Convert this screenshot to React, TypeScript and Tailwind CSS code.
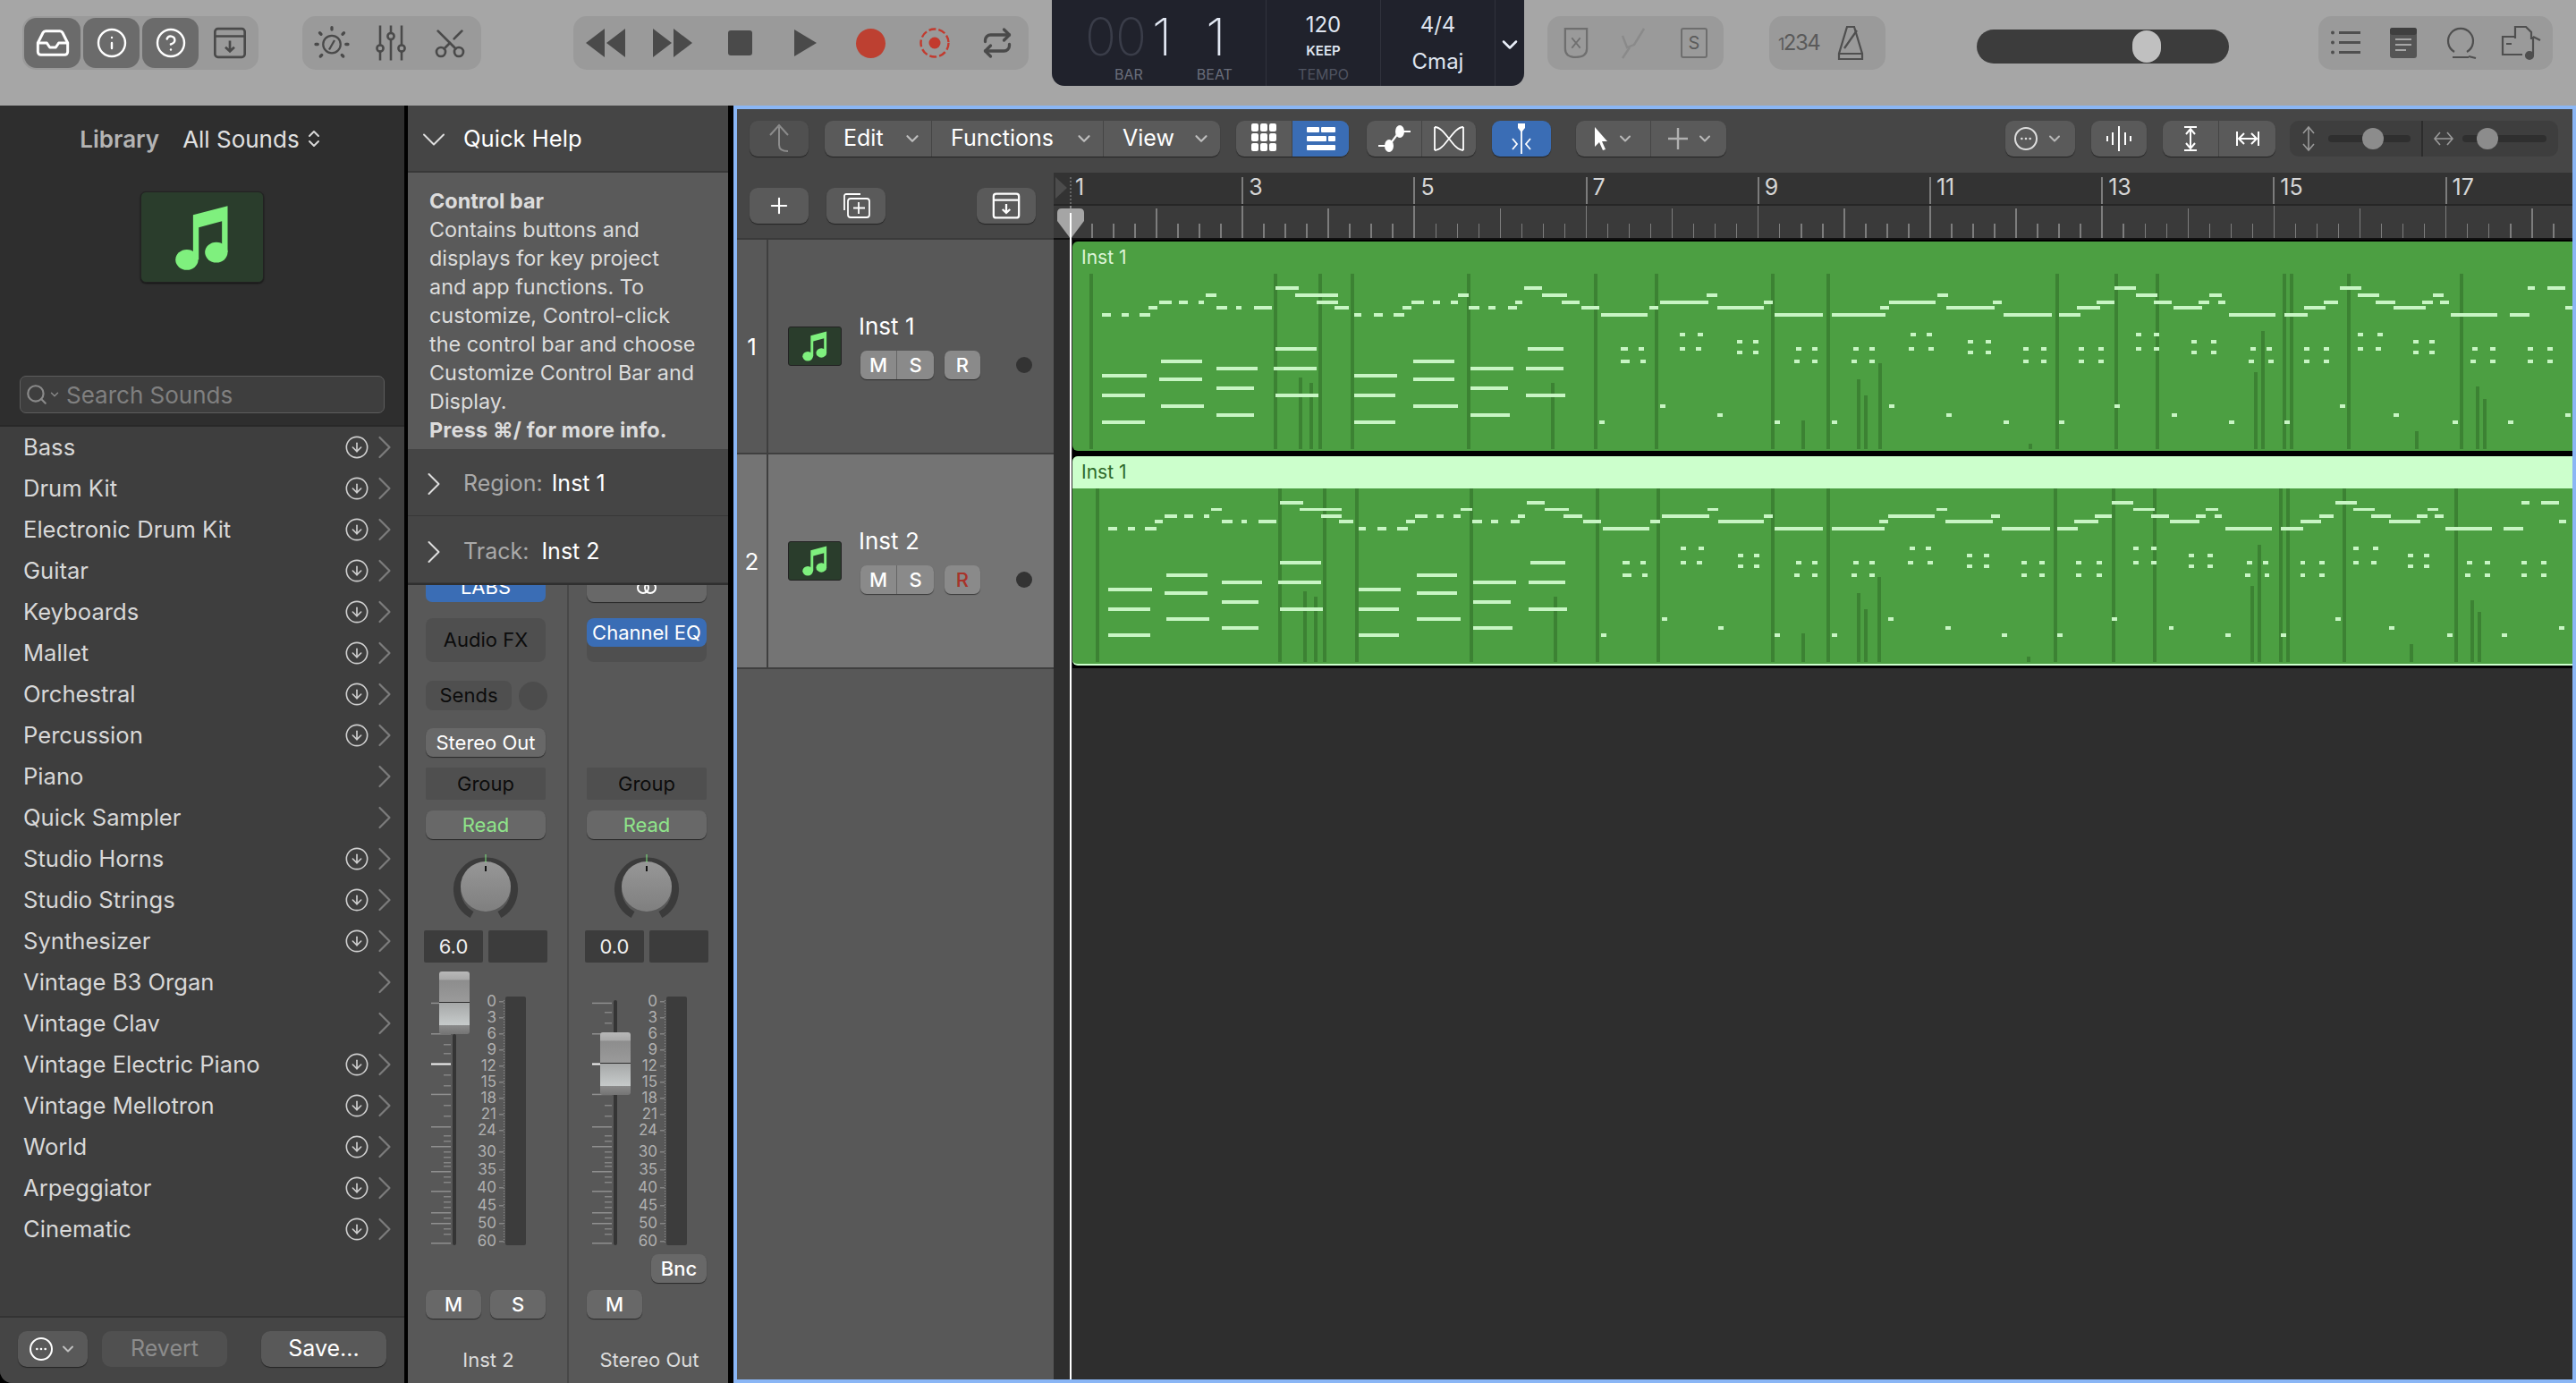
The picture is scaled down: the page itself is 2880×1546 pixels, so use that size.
import React from 'react';
import {
  ChevronDown,
  ChevronRight,
  ChevronsUpDown,
  CircleArrowDown,
  Ellipsis,
  Info,
  CircleHelp,
  Inbox,
  Plus,
  Repeat,
  Scissors,
  Search,
} from 'lucide-react';

const SOUNDS: [string, boolean][] = [
  ['Bass', true],
  ['Drum Kit', true],
  ['Electronic Drum Kit', true],
  ['Guitar', true],
  ['Keyboards', true],
  ['Mallet', true],
  ['Orchestral', true],
  ['Percussion', true],
  ['Piano', false],
  ['Quick Sampler', false],
  ['Studio Horns', true],
  ['Studio Strings', true],
  ['Synthesizer', true],
  ['Vintage B3 Organ', false],
  ['Vintage Clav', false],
  ['Vintage Electric Piano', true],
  ['Vintage Mellotron', true],
  ['World', true],
  ['Arpeggiator', true],
  ['Cinematic', true],
];

// notes are measured off the crops, [from, to, y], mapped back to page x below
type N = [number, number, number];
const a = (u: number) => 1180 + u / 1.96;
const b = (u: number) => 2100 + u / 2.01;
const c = (u: number) => 1960 + u / 3;

const NOTES_A: N[] = [
  [102, 122, 82], [145, 161, 82], [184, 208, 82], [204, 223, 74], [227, 255, 68], [270, 290, 68], [314, 325, 68],
  [329, 353, 60], [353, 377, 74], [396, 408, 74], [435, 474, 74], [482, 533, 52], [525, 619, 60], [572, 619, 68],
  [612, 643, 74], [655, 671, 82], [698, 717, 82], [741, 764, 82], [760, 780, 74], [780, 808, 68], [827, 843, 68],
  [866, 882, 68], [882, 906, 60], [906, 929, 74], [949, 965, 74], [992, 1011, 74], [1007, 1023, 68], [1027, 1066, 52],
  [1066, 1121, 60], [1109, 1149, 68], [1152, 1192, 74], [1196, 1298, 82], [1301, 1321, 74], [1325, 1431, 68],
  [1427, 1450, 60], [1450, 1552, 74], [1552, 1568, 68],
  [102, 200, 150], [102, 196, 172], [102, 196, 202], [231, 321, 134], [227, 321, 154], [231, 325, 184], [353, 443, 142],
  [353, 435, 164], [353, 435, 194], [482, 572, 120], [478, 572, 142], [482, 576, 172], [655, 749, 150], [655, 745, 172],
  [655, 745, 202], [784, 874, 134], [784, 874, 154], [784, 882, 184], [909, 1004, 142], [909, 992, 164], [909, 996, 194],
  [1035, 1113, 120], [1031, 1113, 142], [1031, 1117, 172],
  [1239, 1254, 120], [1278, 1290, 120], [1239, 1258, 134], [1282, 1294, 134], [1368, 1380, 104], [1407, 1419, 104],
  [1368, 1380, 120], [1403, 1415, 120], [1494, 1506, 112], [1529, 1541, 112], [1494, 1506, 124], [1529, 1541, 124],
  [1192, 1203, 202], [1325, 1337, 184], [1450, 1462, 194],
];
const NOTES_C: N[] = [
  [36, 66, 68], [72, 234, 82], [264, 444, 82], [426, 456, 74], [456, 480, 68],
  [144, 162, 120], [198, 216, 120], [138, 156, 134], [198, 216, 134], [336, 354, 120], [390, 408, 120], [330, 348, 134],
  [390, 408, 134], [72, 90, 202], [264, 282, 202], [456, 474, 184],
];
const NOTES_B: N[] = [
  [0, 16, 82], [4, 24, 74], [24, 129, 68], [133, 157, 60], [153, 261, 74], [257, 277, 68], [281, 390, 82], [406, 454, 82],
  [446, 499, 74], [491, 531, 68], [531, 579, 52], [579, 627, 60], [619, 659, 68], [663, 728, 74], [720, 744, 68],
  [744, 772, 60], [764, 780, 68], [788, 893, 82], [913, 965, 82], [957, 1005, 74], [1001, 1033, 68], [1037, 1086, 52],
  [1077, 1126, 60], [1118, 1162, 68], [1158, 1230, 74], [1222, 1246, 68], [1246, 1270, 60], [1262, 1283, 68],
  [1287, 1391, 82], [1419, 1463, 82], [1459, 1476, 52], [1504, 1544, 52], [1544, 1560, 74],
  [72, 84, 104], [109, 121, 104], [68, 80, 120], [113, 125, 120], [201, 213, 112], [241, 253, 112], [201, 213, 124],
  [241, 253, 124], [326, 338, 120], [366, 378, 120], [326, 338, 134], [366, 378, 134], [450, 462, 120], [495, 507, 120],
  [450, 462, 134], [495, 507, 134], [579, 591, 104], [619, 631, 104], [579, 591, 120], [619, 631, 120], [704, 716, 112],
  [748, 760, 112], [704, 716, 124], [748, 760, 124], [836, 848, 120], [872, 884, 120], [832, 844, 134], [876, 888, 134],
  [957, 969, 120], [1001, 1013, 120], [957, 969, 134], [1001, 1013, 134], [1077, 1089, 104], [1122, 1134, 104],
  [1077, 1089, 120], [1118, 1130, 120], [1202, 1214, 112], [1238, 1250, 112], [1202, 1214, 124], [1238, 1250, 124],
  [1335, 1347, 120], [1375, 1387, 120], [1331, 1343, 134], [1375, 1387, 134], [1459, 1471, 120], [1504, 1516, 120],
  [1459, 1471, 134], [1504, 1516, 134],
  [24, 36, 184], [153, 165, 194], [281, 293, 202], [406, 418, 202], [531, 543, 184], [659, 671, 194], [788, 800, 202],
  [913, 925, 202], [1037, 1049, 184], [1158, 1170, 194], [1291, 1303, 202], [1415, 1427, 202], [1544, 1556, 194],
];
// velocity stems: [page x, top]
const STEMS: [number, number][] = [
  [a(78), 36], [a(482), 36], [a(580), 36], [a(651), 36], [a(905), 36], [a(1184), 36], [a(1317), 36],
  [a(537), 152], [a(561), 158], [a(1090), 158],
  [c(66), 36], [c(252), 36], [c(354), 154], [c(378), 172], [c(426), 166], [c(168), 200],
  [b(402), 36], [b(535), 36], [b(627), 36], [b(913), 36], [b(929), 36], [b(1057), 36], [b(1311), 36],
  [b(4), 136], [b(342), 226], [b(848), 146], [b(864), 100], [b(1210), 212], [b(1347), 162], [b(1363), 176],
];

const MidiNotes: React.FC = () => (
  <svg viewBox="1199 0 1677 234" className="absolute inset-0 w-full h-full" shapeRendering="crispEdges">
    {STEMS.map(([x, top], i) => (
      <rect key={i} x={x - 2} y={top} width={4} height={232 - top} fill="#3c8233" />
    ))}
    {NOTES_A.map(([u, v, y], i) => (
      <rect key={i} x={a(u)} y={y - 2} width={(v - u) / 1.96} height={4} fill="#c8f5c4" />
    ))}
    {NOTES_C.map(([u, v, y], i) => (
      <rect key={i} x={c(u)} y={y - 2} width={(v - u) / 3} height={4} fill="#c8f5c4" />
    ))}
    {NOTES_B.map(([u, v, y], i) => (
      <rect key={i} x={b(u)} y={y - 2} width={(v - u) / 2.01} height={4} fill="#c8f5c4" />
    ))}
  </svg>
);

const NoteIcon: React.FC<{ className?: string }> = ({ className }) => (
  <svg viewBox="0 0 20 24" className={className} fill="#7ff07e">
    <ellipse cx="4.6" cy="20" rx="4" ry="3.6" />
    <ellipse cx="15" cy="17.4" rx="4" ry="3.6" />
    <path d="M6.8 20V4.2L19 1v16.4h-2V6.4L8.8 8.6V20z" />
  </svg>
);

const IconBox: React.FC<{ size?: number; color?: string }> = ({ size = 38, color = '#4a4a4a' }) => (
  <svg width={size} height={size} viewBox="0 0 24 24" fill="none" stroke={color} strokeWidth="1.6">
    <rect x="2" y="2.5" width="20" height="19" rx="2" />
    <path d="M2 7.5h20M12 10.5v7M9 14.8l3 2.8 3-2.8" />
  </svg>
);

const DarkGroup: React.FC<{ className: string; children: React.ReactNode }> = ({ className, children }) => (
  <div className={`flex items-center h-[60px] mt-[18px] rounded-[15px] bg-[#9a9a9a] ${className}`}>{children}</div>
);

const ActiveBtn: React.FC<{ children: React.ReactNode }> = ({ children }) => (
  <div className="flex items-center justify-center w-[63px] h-[56px] rounded-[14px] bg-[#6b6b6b] mr-[3px]">{children}</div>
);

const Slot: React.FC<{ className: string; children?: React.ReactNode }> = ({ className, children }) => (
  <div className={`flex items-center justify-center ${className}`}>{children}</div>
);

const TopBar: React.FC = () => (
  <div className="flex h-[118px] bg-[#a6a6a6] shrink-0">
    <DarkGroup className="ml-[25px] w-[264px] pl-[2px]">
      <ActiveBtn><Inbox size={40} color="#fff" strokeWidth={1.8} /></ActiveBtn>
      <ActiveBtn><Info size={36} color="#fff" strokeWidth={1.6} /></ActiveBtn>
      <ActiveBtn><CircleHelp size={36} color="#fff" strokeWidth={1.6} /></ActiveBtn>
      <Slot className="w-[64px]"><IconBox size={40} /></Slot>
    </DarkGroup>

    <DarkGroup className="ml-[49px] w-[200px]">
      <Slot className="w-[66px]">
        <svg width="42" height="42" viewBox="0 0 28 28" fill="none" stroke="#4a4a4a" strokeWidth="1.5">
          <circle cx="14" cy="15" r="6.5" />
          <path d="M12 19l4-7" />
          <path d="M14 2.5v1.5M5 6.5l1 1M23 6.5l-1 1M2 15h1.5M26 15h-1.5M5.5 24l1-1M22.500 24l-1-1" strokeWidth="2.2" strokeLinecap="round" />
        </svg>
      </Slot>
      <Slot className="w-[66px]">
        <svg width="36" height="46" viewBox="0 0 24 30" fill="none" stroke="#4a4a4a" strokeWidth="1.7">
          <path d="M4 2v26M12 2v26M20 2v26" />
          <circle cx="4" cy="19" r="2.4" fill="#9a9a9a" />
          <circle cx="12" cy="10" r="2.4" fill="#9a9a9a" />
          <circle cx="20" cy="19" r="2.4" fill="#9a9a9a" />
        </svg>
      </Slot>
      <Slot className="w-[66px]"><Scissors size={40} color="#4a4a4a" strokeWidth={1.6} className="-rotate-90" /></Slot>
    </DarkGroup>

    <DarkGroup className="ml-[103px] w-[509px]">
      <Slot className="w-[71px]">
        <svg width="46" height="34" viewBox="0 0 46 34" fill="#4a4a4a"><path d="M22 1v32L1 17zM45 1v32L24 17z" /></svg>
      </Slot>
      <Slot className="w-[79px]">
        <svg width="46" height="34" viewBox="0 0 46 34" fill="#4a4a4a"><path d="M1 1v32l21-16zM24 1v32l21-16z" /></svg>
      </Slot>
      <Slot className="w-[72px]"><div className="w-[27px] h-[28px] rounded-[3px] bg-[#4a4a4a]" /></Slot>
      <Slot className="w-[74px]">
        <svg width="26" height="30" viewBox="0 0 26 30" fill="#4a4a4a"><path d="M1 0v30l25-15z" /></svg>
      </Slot>
      <Slot className="w-[73px]"><div className="w-[33px] h-[33px] rounded-full bg-[#bd4031]" /></Slot>
      <Slot className="w-[70px]">
        <svg width="34" height="34" viewBox="0 0 34 34" fill="none">
          <circle cx="17" cy="17" r="15.500" stroke="#c23a2e" strokeWidth="2.4" strokeDasharray="8 3" />
          <circle cx="17" cy="17" r="6.500" fill="#c23a2e" />
        </svg>
      </Slot>
      <Slot className="w-[70px]"><Repeat size={36} color="#4a4a4a" strokeWidth={2.2} /></Slot>
    </DarkGroup>

    <div className="flex w-[528px] h-[96px] rounded-b-[14px] bg-[#20222c] ml-[26px] leading-none">
      <div className="w-[239px] pl-[37px]">
        <div className="flex items-center h-[70px] pt-[12px] text-[58px] font-extralight text-[#e3e9f4]">
          <span className="text-[#3a3d49] tracking-[-1px]">00</span>
          <span className="ml-[7px]">1</span>
          <span className="ml-[38px]">1</span>
        </div>
        <div className="flex mt-[5px] text-[16px] text-[#6a6e7b]">
          <span className="ml-[33px]">BAR</span>
          <span className="ml-[60px]">BEAT</span>
        </div>
      </div>
      <div className="flex flex-col items-center w-[128px] border-l border-[#30323c] pt-[16px] text-[#dfe5f0]">
        <span className="text-[24px]">120</span>
        <span className="mt-[9px] text-[15px] font-semibold">KEEP</span>
        <span className="mt-[11px] text-[16px] text-[#505461]">TEMPO</span>
      </div>
      <div className="flex flex-col items-center w-[128px] border-l border-[#30323c] pt-[16px] text-[#dfe5f0]">
        <span className="text-[24px]">4/4</span>
        <span className="mt-[17px] text-[24px]">Cmaj</span>
      </div>
      <div className="flex items-center justify-center flex-1 border-l border-[#30323c] pt-[4px]">
        <ChevronDown size={28} color="#e8eef8" strokeWidth={2.2} />
      </div>
    </div>

    <DarkGroup className="ml-[26px] w-[197px]">
      <Slot className="w-[63px]">
        <svg width="28" height="38" viewBox="0 0 30 38" fill="none" stroke="#6f6f6f" strokeWidth="2.4">
          <path d="M2 2h26v24q0 10-13 10T2 26z" />
          <path d="M10 13l10 12M20 13L10 25" strokeWidth="1.8" />
        </svg>
      </Slot>
      <Slot className="w-[68px]">
        <svg width="30" height="44" viewBox="0 0 30 44" fill="none" stroke="#8a8a8a" strokeWidth="2.4">
          <path d="M26 6L15 24 7 27 2 14M10 27L2 39" />
        </svg>
      </Slot>
      <Slot className="w-[66px]">
        <div className="flex items-center justify-center w-[30px] h-[34px] rounded-[3px] border-2 border-[#6e6e6e] text-[#5c5c5c] text-[20px]">S</div>
      </Slot>
    </DarkGroup>

    <DarkGroup className="ml-[51px] w-[130px] pl-[10px]">
      <span className="text-[#5a5a5a] text-[24px] tracking-[-1.5px] w-[56px]"><span className="text-[18px]">1</span>234</span>
      <Slot className="w-[50px]">
        <svg width="30" height="40" viewBox="0 0 30 40" fill="none" stroke="#4f4f4f" strokeWidth="2.2">
          <path d="M11 2h8l9 30v6H2v-6z" />
          <path d="M3 32h24M8 26l14-20" />
        </svg>
      </Slot>
    </DarkGroup>

    <div className="flex items-center h-[38px] w-[282px] mt-[33px] ml-[102px] rounded-full bg-[#3c3c3c] pl-[174px]">
      <div className="w-[32px] h-[36px] rounded-full bg-[#c0c0c0]" />
    </div>

    <DarkGroup className="ml-[100px] w-[262px]">
      <Slot className="w-[62px]">
        <svg width="36" height="30" viewBox="0 0 36 30" fill="#4f4f4f">
          <rect x="10" y="2" width="24" height="3" /><rect x="10" y="13" width="24" height="3" /><rect x="10" y="24" width="24" height="3" />
          <circle cx="3" cy="3.500" r="2" /><circle cx="3" cy="14.500" r="2" /><circle cx="3" cy="25.500" r="2" />
        </svg>
      </Slot>
      <Slot className="w-[66px]">
        <svg width="32" height="36" viewBox="0 0 32 36" fill="none">
          <rect x="1" y="1" width="30" height="34" rx="3" fill="#555" />
          <rect x="1" y="1" width="30" height="8" rx="3" fill="#3f3f3f" />
          <path d="M7 14h18M7 20h18M7 26h12" stroke="#a6a6a6" strokeWidth="2" />
        </svg>
      </Slot>
      <Slot className="w-[66px]">
        <svg width="38" height="40" viewBox="0 0 38 40" fill="none" stroke="#4f4f4f" strokeWidth="2.2">
          <path d="M10 30a14 14 0 1 1 14 0" />
          <path d="M8 36h18M26 35l8 2" />
        </svg>
      </Slot>
      <Slot className="w-[66px]">
        <svg width="46" height="42" viewBox="0 0 46 42" fill="none" stroke="#4f4f4f" strokeWidth="2.2">
          <path d="M16 14H2v20h22M6 22h6M16 16V3h12l6 6v8" />
          <path d="M36 14v20M36 14l8 4" />
          <circle cx="32" cy="35" r="4" fill="#4f4f4f" />
        </svg>
      </Slot>
    </DarkGroup>
  </div>
);

const LibraryPanel: React.FC = () => (
  <div className="flex flex-col w-[452px] shrink-0 bg-[#3e3e3e] rounded-bl-[14px] overflow-hidden">
    <div className="flex flex-col items-center h-[359px] shrink-0 bg-[#2e2e2e] border-b-2 border-[#282828]">
      <div className="flex items-center h-[74px] text-[26px]">
        <span className="font-semibold text-[#b4b4b4]">Library</span>
        <span className="ml-[26px] text-[#e0e0e0]">All Sounds</span>
        <ChevronsUpDown size={24} color="#d8d8d8" className="ml-[4px]" />
      </div>
      <div className="flex items-center justify-center w-[138px] h-[102px] mt-[22px] rounded-[6px] bg-[#2a3d2c] border border-[#222] shadow-[0_1px_2px_rgba(0,0,0,0.6)]">
        <NoteIcon className="w-[64px] h-[76px]" />
      </div>
      <div className="flex items-center self-start ml-[22px] mt-[104px] w-[408px] h-[42px] rounded-[7px] bg-[#3e3e3e] border border-[#5d5d5d] text-[26px] text-[#808080]">
        <Search size={26} color="#8a8a8a" className="ml-[5px]" />
        <ChevronDown size={14} color="#8a8a8a" strokeWidth={2.4} />
        <span className="ml-[6px]">Search Sounds</span>
      </div>
    </div>
    <div className="flex flex-col flex-1">
      {SOUNDS.map(([name, dl]) => (
        <div key={name} className="flex items-center h-[46px] pl-[26px] text-[25.6px] text-[#d8d8d8]">
          <span>{name}</span>
          <span className="flex items-center ml-auto pr-[10px]">
            {dl && <CircleArrowDown size={28} color="#cfcfcf" strokeWidth={1.4} />}
            <ChevronRight size={44} color="#7c7c7c" strokeWidth={1.2} className="-ml-[5px] -mr-[10px]" />
          </span>
        </div>
      ))}
    </div>
    <div className="flex items-center h-[75px] shrink-0 bg-[#454545] border-t-2 border-[#333] pb-[3px] pl-[20px] text-[25px]">
      <div className="flex items-center justify-center w-[78px] h-[40px] rounded-[10px] bg-[#595959] shadow-[0_1px_1px_rgba(0,0,0,0.5)]">
        <div className="flex items-center justify-center w-[26px] h-[26px] rounded-full border-2 border-white"><Ellipsis size={16} color="#fff" /></div>
        <ChevronDown size={20} color="#c0c0c0" strokeWidth={2.4} className="ml-[7px]" />
      </div>
      <div className="flex items-center justify-center w-[140px] h-[40px] ml-[16px] rounded-[10px] bg-[#505050] text-[#8c8c8c]">Revert</div>
      <div className="flex items-center justify-center w-[140px] h-[40px] ml-[38px] rounded-[10px] bg-[#595959] text-white shadow-[0_1px_1px_rgba(0,0,0,0.5)]">Save...</div>
    </div>
  </div>
);

const SCALE: [string, number][] = [
  ['0', 118], ['3', 172], ['6', 226], ['9', 280], ['12', 334], ['15', 388], ['18', 442], ['21', 496], ['24', 550],
  ['30', 622], ['35', 682], ['40', 742], ['45', 802], ['50', 862], ['60', 922],
];
const LONG = [122, 225, 428, 537, 603, 687, 753, 825, 861, 927];
const SHORT = [153, 189, 261, 291, 363, 399, 465, 501, 567, 585, 621, 639, 657, 669, 705, 723, 771, 789, 807, 843, 879, 897];

const Fader: React.FC<{ id: string; capTop: number; trackTop: number }> = ({ id, capTop, trackTop }) => (
  <svg width="134" height="320" viewBox="0 0 134 320" className="mt-[4px] shrink-0">
    <defs>
      <linearGradient id={id} x1="0" y1="0" x2="0" y2="1">
        <stop offset="0" stopColor="#b8b8b8" />
        <stop offset="0.13" stopColor="#a8a8a8" />
        <stop offset="0.14" stopColor="#8d8d8d" />
        <stop offset="0.48" stopColor="#9a9a9a" />
        <stop offset="0.48" stopColor="#2e2e2e" />
        <stop offset="0.5" stopColor="#2e2e2e" />
        <stop offset="0.5" stopColor="#a6a8a8" />
        <stop offset="0.85" stopColor="#c6caca" />
        <stop offset="0.86" stopColor="#8a8a8a" />
        <stop offset="1" stopColor="#747474" />
      </linearGradient>
    </defs>
    {LONG.map((v) => <rect key={v} x="6" y={v / 3} width="22" height="1.5" fill="#8f8f8f" />)}
    {SHORT.map((v) => <rect key={v} x="20" y={v / 3} width="8" height="1.5" fill="#848484" />)}
    <rect x="6" y="108.500" width="22" height="2" fill="#f4f4f4" />
    <rect x="30" y={trackTop} width="4" height={312 - trackTop} rx="2" fill="#353535" />
    <rect x="15" y={capTop} width="34" height="70" rx="3" fill={`url(#${id})`} />
    {SCALE.map(([t, v]) => (
      <React.Fragment key={t}>
        <text x="79" y={v / 3 + 6} textAnchor="end" fontSize="17" fill="#b0b0b0">{t}</text>
        <rect x="82" y={v / 3} width="5" height="1" fill="#9a9a9a" />
      </React.Fragment>
    ))}
    <line x1="87.500" y1="38" x2="87.500" y2="310" stroke="#909090" strokeDasharray="1 2" />
    <rect x="89" y="34" width="23" height="278" rx="2" fill="#3c3c3c" />
  </svg>
);

const Knob: React.FC<{ id: string }> = ({ id }) => (
  <svg width="134" height="76" viewBox="0 0 134 76" className="mt-[17px] shrink-0">
    <defs>
      <linearGradient id={id} x1="0" y1="0" x2="0" y2="1">
        <stop offset="0" stopColor="#979797" />
        <stop offset="1" stopColor="#7f7f7f" />
      </linearGradient>
    </defs>
    <path d="M51.600 67.500A32 32 0 1 1 82.400 67.500" fill="none" stroke="#3b3b3b" strokeWidth="8" />
    <circle cx="67" cy="36" r="28" fill={`url(#${id})`} />
    <rect x="66.500" y="0" width="1" height="9" fill="#7fe67f" />
    <rect x="66" y="13" width="2" height="6" fill="#111" />
  </svg>
);

const RAISED = 'flex items-center justify-center rounded-[8px] bg-[#686868] shadow-[0_1px_1px_rgba(0,0,0,0.55)]';
const GROUPCELL = 'flex items-center justify-center w-[134px] h-[36px] mt-[12px] rounded-[2px] bg-[#4f4f4f] text-[#0c0c0c]';

const Channel: React.FC<{
  id: string;
  cls: string;
  top: React.ReactNode;
  fx: React.ReactNode;
  sends: React.ReactNode;
  value: string;
  capTop: number;
  trackTop: number;
  bnc?: boolean;
  solo?: boolean;
  name: string;
}> = ({ id, cls, top, fx, sends, value, capTop, trackTop, bnc, solo, name }) => (
  <div className={cls}>
    <div className="flex flex-col pl-[20px] text-[22px]">
      <div className="h-[33px] mt-[-14px]">{top}</div>
      <div className="h-[49px] mt-[18px]">{fx}</div>
      <div className="h-[33px] mt-[21px]">{sends}</div>
      <div className="h-[32px] mt-[20px]">
        {sends && <div className={`${RAISED} w-[134px] h-[32px] text-white`}>Stereo Out</div>}
      </div>
      <div className={GROUPCELL}>Group</div>
      <div className={`${RAISED} w-[134px] h-[32px] mt-[12px] text-[#8fe48a]`}>Read</div>
      <Knob id={`${id}k`} />
      <div className="flex mt-[9px] ml-[-2px] gap-[6px] h-[36px]">
        <div className="flex items-center justify-center w-[66px] rounded-[2px] bg-[#3c3c3c] text-[#eee]">{value}</div>
        <div className="w-[66px] rounded-[2px] bg-[#3c3c3c]" />
      </div>
      <Fader id={`${id}f`} capTop={capTop} trackTop={trackTop} />
      <div className="flex justify-end w-[134px] h-[32px] mt-[2px]">
        {bnc && <div className={`${RAISED} w-[62px] h-[32px] text-white font-medium`}>Bnc</div>}
      </div>
      <div className="flex gap-[10px] mt-[8px] h-[32px] text-white font-medium">
        <div className={`${RAISED} w-[62px]`}>M</div>
        {solo && <div className={`${RAISED} w-[62px]`}>S</div>}
      </div>
    </div>
    <div className="mt-[30px] text-center text-[22px] text-[#dcdcdc] pl-[2px]">{name}</div>
  </div>
);

const Inspector: React.FC = () => (
  <div className="flex flex-col w-[358px] shrink-0 bg-[#454545] overflow-hidden">
    <div className="flex items-center h-[75px] shrink-0 pl-[7px] pt-[2px] border-b-2 border-[#383838] text-[25.6px] text-white">
      <ChevronDown size={44} color="#dedede" strokeWidth={1.1} />
      <span className="ml-[11px]">Quick Help</span>
    </div>
    <div className="h-[309px] shrink-0 pt-[16px] pl-[24px] bg-[#5a5a5a] text-[23.4px] leading-[32px] text-[#dcdcdc]">
      <div className="font-bold">Control bar</div>
      <div>Contains buttons and</div>
      <div>displays for key project</div>
      <div>and app functions. To</div>
      <div>customize, Control-click</div>
      <div>the control bar and choose</div>
      <div>Customize Control Bar and</div>
      <div>Display.</div>
      <div className="font-bold tracking-[0.2px]">Press ⌘/ for more info.</div>
    </div>
    <div className="flex items-center h-[75px] shrink-0 pl-[7px] pt-[3px] border-b border-[#383838] text-[25px]">
      <ChevronRight size={44} color="#dedede" strokeWidth={1.1} />
      <span className="ml-[11px] text-[#a9a9a9]">Region:</span>
      <span className="ml-[10px] text-white">Inst 1</span>
    </div>
    <div className="flex items-center h-[75px] shrink-0 pl-[7px] pt-[6px] border-b border-[#383838] text-[25px]">
      <ChevronRight size={44} color="#dedede" strokeWidth={1.1} />
      <span className="ml-[11px] text-[#a9a9a9]">Track:</span>
      <span className="ml-[14px] text-white">Inst 2</span>
    </div>
    <div className="flex flex-1 bg-[#585858] border-t-2 border-[#2f2f2f] overflow-hidden">
      <Channel
        id="c1"
        cls="w-[180px] border-r-2 border-[#484848]"
        top={<div className="flex items-center justify-center w-[134px] h-[33px] rounded-[7px] bg-[#3a6db5] text-white">LABS</div>}
        fx={<div className="flex items-center justify-center w-[134px] h-[49px] rounded-[8px] bg-[#4f4f4f] text-[#0c0c0c]">Audio FX</div>}
        sends={
          <div className="flex items-center">
            <div className="flex items-center justify-center w-[96px] h-[33px] rounded-[8px] bg-[#4f4f4f] text-[#0c0c0c]">Sends</div>
            <div className="w-[32px] h-[32px] ml-[8px] rounded-full bg-[#4c4c4c]" />
          </div>
        }
        value="6.0"
        capTop={6}
        trackTop={76}
        solo
        name="Inst 2"
      />
      <Channel
        id="c2"
        cls="w-[178px]"
        top={
          <div className={`${RAISED} w-[134px] h-[33px] rounded-[7px]`}>
            <svg width="26" height="14" viewBox="0 0 26 14" fill="none" stroke="#fff" strokeWidth="2"><circle cx="9" cy="7" r="6" /><circle cx="17" cy="7" r="6" /></svg>
          </div>
        }
        fx={
          <div className="w-[134px] h-[49px] rounded-[8px] bg-[#4f4f4f]">
            <div className="flex items-center justify-center h-[32px] rounded-[8px] bg-[#3a6db5] text-white">Channel EQ</div>
          </div>
        }
        sends={null}
        value="0.0"
        capTop={74}
        trackTop={38}
        bnc
        name="Stereo Out"
      />
    </div>
  </div>
);

const ToolBtn: React.FC<{ className: string; children?: React.ReactNode }> = ({ className, children }) => (
  <div className={`flex items-center h-[40px] rounded-[9px] bg-[#5a5a5a] shadow-[0_1px_1px_rgba(0,0,0,0.5)] shrink-0 ${className}`}>{children}</div>
);

const MainToolbar: React.FC = () => (
  <div className="flex items-center h-[71px] shrink-0 pl-[14px] pb-[6px] bg-[#464646] text-[25px] text-white">
    <ToolBtn className="w-[66px] justify-center bg-[#505050]">
      <svg width="32" height="34" viewBox="0 0 32 34" fill="none" stroke="#8c8c8c" strokeWidth="2"><path d="M16 24V4M6 13l10-11 10 11M16 24q0 7 10 7" /></svg>
    </ToolBtn>
    <ToolBtn className="w-[442px] ml-[18px]">
      {[['Edit', 'w-[119px]'], ['Functions', 'w-[192px] border-l border-[#454545]'], ['View', 'w-[131px] border-l border-[#454545]']].map(([t, w]) => (
        <div key={t} className={`flex items-center justify-between h-full pl-[21px] pr-[10px] ${w}`}>
          <span>{t}</span>
          <ChevronDown size={22} color="#bdbdbd" strokeWidth={2.4} />
        </div>
      ))}
    </ToolBtn>
    <ToolBtn className="w-[126px] ml-[18px] overflow-hidden">
      <Slot className="w-[63px] h-full border-r border-[#454545]">
        <svg width="28" height="34" viewBox="0 0 28 34" fill="#fff">
          {[0, 11, 22].map((y) => [0, 10, 20].map((x) => <rect key={`${x}${y}`} x={x} y={y} width="8" height="9" rx="2" />))}
        </svg>
      </Slot>
      <Slot className="w-[63px] h-full bg-[#3a6db5]">
        <svg width="32" height="30" viewBox="0 0 32 30" fill="#fff"><rect x="0" y="2" width="14" height="6" rx="1" /><rect x="16" y="2" width="16" height="6" rx="1" /><rect x="0" y="12" width="22" height="6" rx="1" /><rect x="24" y="12" width="8" height="6" rx="1" /><rect x="0" y="22" width="32" height="6" rx="1" /></svg>
      </Slot>
    </ToolBtn>
    <ToolBtn className="w-[122px] ml-[20px]">
      <Slot className="w-[62px] h-full border-r border-[#454545]">
        <svg width="36" height="32" viewBox="0 0 36 32" fill="#fff"><ellipse cx="24" cy="8" rx="5" ry="7" /><ellipse cx="12" cy="24" rx="5" ry="7" /><path d="M11 23l12-16 2 1-12 16zM28 7h8v2h-8zM0 23h8v2H0z" /></svg>
      </Slot>
      <Slot className="w-[60px]">
        <svg width="34" height="30" viewBox="0 0 34 30" fill="none" stroke="#fff" strokeWidth="1.800"><path d="M1 2v26M33 2v26M1 2c12 0 20 26 32 26M33 2C21 2 13 28 1 28" /></svg>
      </Slot>
    </ToolBtn>
    <ToolBtn className="w-[66px] ml-[18px] justify-center !bg-[#3a6db5]">
      <svg width="30" height="34" viewBox="0 0 30 34" fill="none" stroke="#fff" strokeWidth="1.800">
        <path d="M15 6v28M5 17l5 6-5 6M25 17l-5 6 5 6" />
        <path d="M11 0h8v5l-4 5-4-5z" fill="#fff" stroke="none" />
      </svg>
    </ToolBtn>
    <ToolBtn className="w-[168px] ml-[28px]">
      <div className="flex items-center h-full w-[84px] pl-[20px] border-r border-[#454545]">
        <svg width="16" height="28" viewBox="0 0 16 28" fill="#fff"><path d="M1 1v22l5-5 4 9 3-1-4-9h6z" /></svg>
        <ChevronDown size={20} color="#b8b8b8" strokeWidth={2.4} className="ml-[9px]" />
      </div>
      <div className="flex items-center pl-[19px]">
        <svg width="22" height="24" viewBox="0 0 22 24" fill="none" stroke="#b0b0b0" strokeWidth="2.400"><path d="M11 0v24M0 12h22" /></svg>
        <ChevronDown size={20} color="#b8b8b8" strokeWidth={2.4} className="ml-[9px]" />
      </div>
    </ToolBtn>
    <ToolBtn className="w-[78px] ml-[312px] pl-[10px]">
      <div className="flex items-center justify-center w-[26px] h-[26px] rounded-full border-2 border-[#ddd]"><Ellipsis size={16} color="#ddd" /></div>
      <ChevronDown size={20} color="#b8b8b8" strokeWidth={2.4} className="ml-[9px]" />
    </ToolBtn>
    <ToolBtn className="w-[62px] ml-[18px] justify-center">
      <svg width="30" height="30" viewBox="0 0 30 30" stroke="#fff" strokeWidth="2"><path d="M2 12v6M8 8v14M15 1v28M22 8v14M28 12v6" /></svg>
    </ToolBtn>
    <ToolBtn className="w-[126px] ml-[18px]">
      <Slot className="w-[63px] h-full border-r border-[#454545]">
        <svg width="22" height="28" viewBox="0 0 22 28" fill="none" stroke="#fff" strokeWidth="2"><path d="M4 1h14M4 27h14M11 3v22M6 9l5-6 5 6M6 19l5 6 5-6" /></svg>
      </Slot>
      <Slot className="w-[63px]">
        <svg width="26" height="20" viewBox="0 0 26 20" fill="none" stroke="#fff" strokeWidth="2"><path d="M1 2v16M25 2v16M3 10h20M9 4l-6 6 6 6M17 4l6 6-6 6" /></svg>
      </Slot>
    </ToolBtn>
    <div className="flex items-center h-[40px] w-[300px] ml-[16px] rounded-[10px] bg-[#3e3e3e] shrink-0">
      <div className="flex items-center h-full w-[149px] pl-[13px] border-r-2 border-[#2c2c2c]">
        <svg width="16" height="30" viewBox="0 0 16 30" fill="none" stroke="#999" strokeWidth="1.600"><path d="M8 2v26M2 9l6-7 6 7M2 21l6 7 6-7" /></svg>
        <div className="flex items-center ml-[14px] w-[92px] h-[8px] rounded-full bg-[#2f2f2f]"><div className="w-[24px] h-[24px] ml-[38px] rounded-full bg-[#8c8c8c]" /></div>
      </div>
      <div className="flex items-center pl-[11px]">
        <svg width="24" height="18" viewBox="0 0 24 18" fill="none" stroke="#999" strokeWidth="1.600"><path d="M2 9h20M8 2L2 9l6 7M16 2l6 7-6 7" /></svg>
        <div className="flex items-center ml-[9px] w-[94px] h-[8px] rounded-full bg-[#2f2f2f]"><div className="w-[24px] h-[24px] ml-[16px] rounded-full bg-[#8c8c8c]" /></div>
      </div>
    </div>
  </div>
);

const TrackHeader: React.FC<{ n: number; name: string; cls: string; armed?: boolean }> = ({ n, name, cls, armed }) => (
  <div className={`flex h-[240px] shrink-0 border-b-2 border-[#3f3f3f] text-white ${cls}`}>
    <div className="flex items-center justify-center w-[35px] border-r-2 border-[#3f3f3f] text-[26px] pt-[1px]">{n}</div>
    <div className="flex items-center w-[60px] ml-[22px]">
      <div className="flex items-center justify-center w-[60px] h-[44px] mt-[-1px] rounded-[3px] bg-[#2a3d2c] border border-[#222]">
        <NoteIcon className="w-[30px] h-[35px]" />
      </div>
    </div>
    <div className="flex flex-col pl-[19px] pt-[82px]">
      <span className="text-[26px] leading-[30px]">{name}</span>
      <div className="flex items-center mt-[12px] ml-[2px] text-[22px] font-medium">
        <div className="flex w-[82px] h-[32px] rounded-[7px] bg-[#8a8a8a] shadow-[0_1px_1px_rgba(0,0,0,0.5)] overflow-hidden">
          <Slot className="w-[41px] border-r border-[#666]">M</Slot>
          <Slot className="w-[41px]">S</Slot>
        </div>
        <Slot className={`w-[40px] h-[32px] ml-[12px] rounded-[7px] bg-[#8a8a8a] shadow-[0_1px_1px_rgba(0,0,0,0.5)] ${armed ? 'text-[#a8332a]' : ''}`}>R</Slot>
        <div className="w-[18px] h-[18px] ml-[40px] rounded-full bg-[#333]" />
      </div>
    </div>
  </div>
);

const RULER_BARS = [1, 3, 5, 7, 9, 11, 13, 15, 17];

const Ruler: React.FC = () => (
  <div className="flex flex-col h-[75px] shrink-0 bg-[#3a3a3a] overflow-hidden">
    <div className="flex h-[37px] shrink-0 pl-[18px] pt-[5px] bg-[#333] border-b-2 border-[#262626] text-[25px] leading-[22px] text-[#d6d6d6]">
      {RULER_BARS.map((n) => (
        <div key={n} className={`w-[192.2px] shrink-0 pl-[6px] ${n === 1 ? '' : 'border-l-2 border-[#7c7c7c]'}`}>{n}</div>
      ))}
    </div>
    <svg viewBox="1178 0 1698 38" className="w-full h-[38px] shrink-0" shapeRendering="crispEdges">
      {Array.from({ length: 71 }).map((_, i) => {
        const x = 1196 + i * 24.03;
        const top = i % 8 === 0 ? 0 : i % 4 === 0 ? 3 : 20;
        return <rect key={i} x={x} y={top} width="1.500" height={38 - top} fill="#7d7d7d" />;
      })}
      <rect x="1178" y="36" width="1698" height="2" fill="#111" />
    </svg>
  </div>
);

const Region: React.FC<{ selected?: boolean }> = ({ selected }) => (
  <div className={`relative h-[234px] rounded-l-[6px] bg-[#4c9f42] overflow-hidden ${selected ? 'border-b-2 border-[#ccffcc]' : ''}`}>
    <MidiNotes />
    <div className={`relative flex items-center h-[36px] pl-[10px] text-[21px] ${selected ? 'bg-[#ccffcc] text-[#2f6a2a]' : 'text-[#dcf5d8]'}`}>Inst 1</div>
  </div>
);

const Arrange: React.FC = () => (
  <div className="relative flex flex-col flex-1 min-w-0 bg-[#2e2e2e]">
    <Ruler />
    <div className="pl-[21px]">
      <div className="bg-black pt-[2px] pb-[3px]"><Region /></div>
      <div className="bg-black pt-[3px] pb-[3px]"><Region selected /></div>
    </div>
    {/* playhead + cycle marker sit on top of the ruler and regions */}
    <svg width="36" height="75" viewBox="0 0 36 75" className="absolute left-[1px] top-0">
      <path d="M1 5l13 12L1 29z" fill="#4c4c4c" />
      <path d="M18 5v34" stroke="#9a9a9a" strokeDasharray="2 2" strokeWidth="1" />
      <path d="M3 45q0-5 5-5h20q5 0 5 5v9L18 74 3 54z" fill="#a5a5a5" />
    </svg>
    <div className="absolute left-[18px] top-[45px] bottom-0 w-[2px] bg-white" />
  </div>
);

const MainPanel: React.FC = () => (
  <div className="flex flex-col flex-1 min-w-0 border-4 border-[#8ab6f5] bg-[#464646] overflow-hidden">
    <MainToolbar />
    <div className="flex flex-1 min-h-0">
      <div className="flex flex-col w-[354px] shrink-0 bg-[#585858]">
        <div className="flex items-center h-[75px] shrink-0 pl-[14px] bg-[#464646] border-b-2 border-[#3a3a3a]">
          <ToolBtn className="w-[66px] justify-center"><Plus size={28} color="#fff" strokeWidth={1.8} /></ToolBtn>
          <ToolBtn className="w-[66px] ml-[20px] justify-center">
            <svg width="36" height="30" viewBox="0 0 36 30" fill="none" stroke="#fff" strokeWidth="1.800">
              <path d="M5 20V4a2 2 0 0 1 2-2h16" />
              <rect x="9" y="7" width="24" height="21" rx="3" />
              <path d="M21 11v13M15 17.500h13" />
            </svg>
          </ToolBtn>
          <ToolBtn className="w-[66px] ml-[102px] justify-center"><IconBox size={34} color="#fff" /></ToolBtn>
        </div>
        <TrackHeader n={1} name="Inst 1" cls="bg-[#585858]" />
        <TrackHeader n={2} name="Inst 2" cls="bg-[#747474]" armed />
      </div>
      <Arrange />
    </div>
  </div>
);

const App: React.FC = () => (
  <div className="flex flex-col w-[2880px] h-[1546px] overflow-hidden bg-[#a6a6a6] font-['Inter','Liberation_Sans',sans-serif]">
    <TopBar />
    <div className="flex flex-1 min-h-0 bg-black">
      <LibraryPanel />
      <div className="w-[4px] shrink-0" />
      <Inspector />
      <div className="w-[6px] shrink-0" />
      <MainPanel />
    </div>
  </div>
);

export default App;
